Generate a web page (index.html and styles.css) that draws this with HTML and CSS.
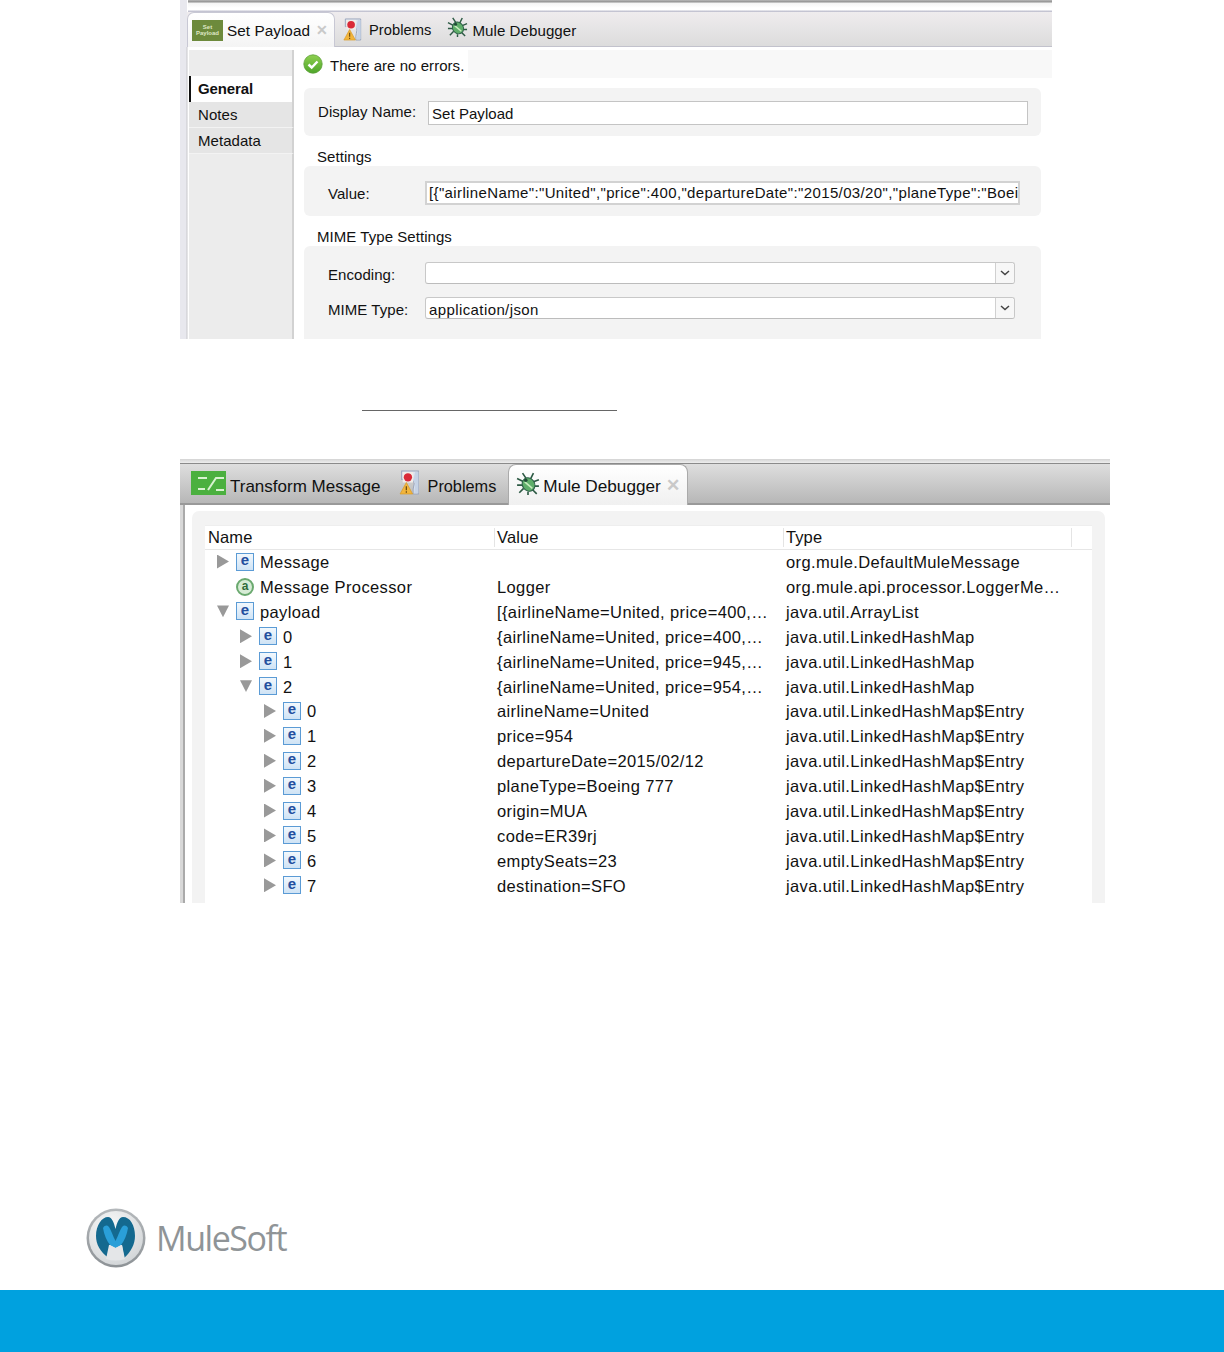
FILE: index.html
```html
<!DOCTYPE html>
<html lang="en">
<head>
<meta charset="utf-8">
<title>Set Payload and Mule Debugger</title>
<link rel="stylesheet" href="styles.css">
</head>
<body>
<svg class="defs" width="0" height="0" aria-hidden="true">
  <defs>
    <linearGradient id="gCheck" x1="0" y1="0" x2="0" y2="1"><stop offset="0" stop-color="#8fd050"/><stop offset="1" stop-color="#4ea52a"/></linearGradient>
    <linearGradient id="gRing" x1="0" y1="0" x2="0" y2="1"><stop offset="0" stop-color="#b5b9bc"/><stop offset="1" stop-color="#8d9296"/></linearGradient>
    <radialGradient id="gFace" cx=".4" cy=".3" r=".9"><stop offset="0" stop-color="#fafafa"/><stop offset="1" stop-color="#c9cdd0"/></radialGradient>
    <symbol id="problems" viewBox="0 0 20 24">
      <path d="M2 1h16v22h-5V19c0-2 1-4 1-6s-1-3-2-4H5L2 9z" fill="#dfe4ee" stroke="#9aa6bd" stroke-width="1"/>
      <rect x="3" y="2" width="10" height="10" fill="#f1ece8"/>
      <circle cx="8" cy="7" r="4" fill="#d92a38"/>
      <path d="M13 10l2 3-1 9h4V2h-3z" fill="#c6d3e6"/>
      <path d="M6.500 12L12.500 23H.5z" fill="#f2b53c" stroke="#d99a25" stroke-width=".7"/>
      <path d="M6.500 15.500v4M6.500 20.500v1.300" stroke="#6b4a10" stroke-width="1.200"/>
    </symbol>
    <symbol id="bug" viewBox="0 0 22 22">
      <path d="M6 1l4 6M16 1l-3 6M1 6l6 3M21 7l-5 2M1 12h5M21 13h-4M3 19l4-4M19 20l-4-4M11 21l0-3" stroke="#2d5a44" stroke-width="1.500" fill="none"/>
      <ellipse cx="11.500" cy="11.500" rx="5.600" ry="6.400" fill="#5fae6a" stroke="#2c5f47" stroke-width="1" transform="rotate(-35 11.500 11.500)"/>
      <path d="M8 9l7 6" stroke="#c8ecbe" stroke-width="1.500"/>
      <circle cx="9" cy="7.500" r="1.600" fill="#1f4a36"/>
    </symbol>
    <symbol id="chev" viewBox="0 0 10 6">
      <path d="M1 1l4 3.500L9 1" fill="none" stroke="#444" stroke-width="1.500"/>
    </symbol>
  </defs>
</svg>
<div class="page">

  <section class="panel-a">
    <div class="strip-a"></div>
    <div class="tabs-a">
      <div class="tab-a-active">
        <span class="payload-icon"><span>Set</span><span>Payload</span></span>
        <span class="tab-a-label">Set Payload</span>
        <span class="close-a">✕</span>
      </div>
      <div class="tab-a tab-a-problems">
        <svg class="ico-prob-a"><use href="#problems"/></svg>
        <span class="tab-a-label">Problems</span>
      </div>
      <div class="tab-a tab-a-debug">
        <svg class="ico-bug-a"><use href="#bug"/></svg>
        <span class="tab-a-label">Mule Debugger</span>
      </div>
    </div>
    <div class="body-a">
      <aside class="side">
        <div class="side-gap"></div>
        <div class="side-item side-active">General</div>
        <div class="side-item">Notes</div>
        <div class="side-item">Metadata</div>
      </aside>
      <div class="form">
        <div class="status">
          <div class="status-msg">
            <svg class="check" viewBox="0 0 20 20">
              <circle cx="10" cy="10" r="9.200" fill="url(#gCheck)" stroke="#5c9f37" stroke-width=".8"/>
              <path d="M5.500 10.500l3.200 3 5.800-6" fill="none" stroke="#fff" stroke-width="2.400"/>
            </svg>
            <span>There are no errors.</span>
          </div>
        </div>
        <div class="group group-name">
          <span class="lbl lbl-name">Display Name:</span>
          <div class="field field-name">Set Payload</div>
        </div>
        <div class="group-title title-settings">Settings</div>
        <div class="group group-value">
          <span class="lbl lbl-value">Value:</span>
          <div class="field field-value">[{"airlineName":"United","price":400,"departureDate":"2015/03/20","planeType":"Boei</div>
        </div>
        <div class="group-title title-mime">MIME Type Settings</div>
        <div class="group group-mime">
          <div class="mime-row">
            <span class="lbl lbl-value">Encoding:</span>
            <div class="combo"><div class="combo-text"></div><div class="combo-btn"><svg class="chev"><use href="#chev"/></svg></div></div>
          </div>
          <div class="mime-row">
            <span class="lbl lbl-value">MIME Type:</span>
            <div class="combo"><div class="combo-text">application/json</div><div class="combo-btn"><svg class="chev"><use href="#chev"/></svg></div></div>
          </div>
        </div>
      </div>
    </div>
  </section>

  <div class="rule"></div>

  <section class="panel-b">
    <div class="strip-b"></div>
    <div class="tabs-b">
      <div class="tab-b tab-b-transform">
        <svg class="ico-transform" viewBox="0 0 35 24">
          <rect width="35" height="24" fill="#4bb03f"/>
          <path d="M7 7h9M25 19h8M17 19l8-12h8M7 18h7" fill="none" stroke="#d8f2d0" stroke-width="2"/>
        </svg>
        <span class="tab-b-label">Transform Message</span>
      </div>
      <div class="tab-b tab-b-problems">
        <svg class="ico-prob-b"><use href="#problems"/></svg>
        <span class="tab-b-label">Problems</span>
      </div>
      <div class="tab-b-active">
        <svg class="ico-bug-b"><use href="#bug"/></svg>
        <span class="tab-b-active-label">Mule Debugger</span>
        <span class="close-b">✕</span>
      </div>
    </div>
    <div class="body-b">
      <div class="card">
        <div class="tree">
          <div class="tree-head">
            <div class="th th-name">Name</div>
            <div class="th">Value</div>
            <div class="th th-type">Type</div>
          </div>
          <div class="row"><div class="cell-name l1"><i class="tri"></i><b class="e">e</b>Message</div><div class="cell"></div><div class="cell">org.mule.DefaultMuleMessage</div></div>
          <div class="row"><div class="cell-name l1"><i class="tri-none"></i><b class="a">a</b>Message Processor</div><div class="cell">Logger</div><div class="cell">org.mule.api.processor.LoggerMe…</div></div>
          <div class="row"><div class="cell-name l1"><i class="tri-down"></i><b class="e">e</b>payload</div><div class="cell">[{airlineName=United, price=400,…</div><div class="cell">java.util.ArrayList</div></div>
          <div class="row"><div class="cell-name l2"><i class="tri"></i><b class="e">e</b>0</div><div class="cell">{airlineName=United, price=400,…</div><div class="cell">java.util.LinkedHashMap</div></div>
          <div class="row"><div class="cell-name l2"><i class="tri"></i><b class="e">e</b>1</div><div class="cell">{airlineName=United, price=945,…</div><div class="cell">java.util.LinkedHashMap</div></div>
          <div class="row"><div class="cell-name l2"><i class="tri-down"></i><b class="e">e</b>2</div><div class="cell">{airlineName=United, price=954,…</div><div class="cell">java.util.LinkedHashMap</div></div>
          <div class="row"><div class="cell-name l3"><i class="tri"></i><b class="e">e</b>0</div><div class="cell">airlineName=United</div><div class="cell">java.util.LinkedHashMap$Entry</div></div>
          <div class="row"><div class="cell-name l3"><i class="tri"></i><b class="e">e</b>1</div><div class="cell">price=954</div><div class="cell">java.util.LinkedHashMap$Entry</div></div>
          <div class="row"><div class="cell-name l3"><i class="tri"></i><b class="e">e</b>2</div><div class="cell">departureDate=2015/02/12</div><div class="cell">java.util.LinkedHashMap$Entry</div></div>
          <div class="row"><div class="cell-name l3"><i class="tri"></i><b class="e">e</b>3</div><div class="cell">planeType=Boeing 777</div><div class="cell">java.util.LinkedHashMap$Entry</div></div>
          <div class="row"><div class="cell-name l3"><i class="tri"></i><b class="e">e</b>4</div><div class="cell">origin=MUA</div><div class="cell">java.util.LinkedHashMap$Entry</div></div>
          <div class="row"><div class="cell-name l3"><i class="tri"></i><b class="e">e</b>5</div><div class="cell">code=ER39rj</div><div class="cell">java.util.LinkedHashMap$Entry</div></div>
          <div class="row"><div class="cell-name l3"><i class="tri"></i><b class="e">e</b>6</div><div class="cell">emptySeats=23</div><div class="cell">java.util.LinkedHashMap$Entry</div></div>
          <div class="row"><div class="cell-name l3"><i class="tri"></i><b class="e">e</b>7</div><div class="cell">destination=SFO</div><div class="cell">java.util.LinkedHashMap$Entry</div></div>
        </div>
      </div>
    </div>
  </section>

  <div class="logo">
    <svg class="logo-mark" viewBox="0 0 60 60">
      <circle cx="30" cy="30" r="29.500" fill="url(#gRing)"/>
      <circle cx="30" cy="30" r="27" fill="url(#gFace)"/>
      <path d="M23 50C14 44 10 36 10 28 10 17 16 9 22 9c4 0 6 6 7.500 12C31 15 33 9 37 9c7 0 12 8 12 19 0 8-4 16-11 22l-2-13H23z" fill="#14698f"/>
      <path d="M17 20c2-3 4-3 6-1 2 3 4 9 6.500 14 2.500-5 4.500-11 6.500-14 2-2 4-2 6 1-1 7-4 13-7 17l-5.500 3-5.500-3c-3-4-6-10-7-17z" fill="#2a9fd8"/>
      <path d="M23 37l6.500 3 6.500-3 3 14q-9.500 3-19 0z" fill="#e4e6e8"/>
    </svg>
    <span class="logo-text">MuleSoft</span>
  </div>

  <footer class="footer"></footer>
</div>
</body>
</html>
```
FILE: styles.css
```css
* { box-sizing: border-box; }
html, body { margin: 0; padding: 0; background: #fff; }
body { font-family: "Liberation Sans", Arial, sans-serif; color: #111; }
.defs { position: absolute; }
.page { width: 1224px; height: 1352px; display: flex; flex-direction: column; overflow: hidden; }

/* top panel */
.panel-a { width: 872px; height: 339px; margin-left: 180px; display: flex; flex-direction: column; overflow: hidden; font-size: 15px; letter-spacing: .05px; background: linear-gradient(90deg, #e8e8ee 7px, #fff 7px); }
.strip-a { height: 12px; flex: none; background: linear-gradient(#b9b9b9 0, #8f8f8f 2px, #f4f4f4 3px, #fff 8px, #fff 10px, #c4c4d2 11px); margin-left: 8px; }
.tabs-a { height: 35px; flex: none; display: flex; align-items: stretch; margin-left: 7px; background: linear-gradient(#efecee, #dcdcdc); border-bottom: 1px solid #c2c2cc; position: relative; }
.tab-a-active { width: 148px; height: 35px; display: flex; align-items: center; padding-left: 4px; background: linear-gradient(#fff, #f4f4f4); border: 1px solid #c8c8d4; border-bottom: 0; border-radius: 7px 7px 0 0; flex: none; }
.payload-icon { width: 31px; height: 21px; flex: none; background: #6d8a3c; color: #dfe8c4; font-size: 6px; line-height: 6px; letter-spacing: 0; display: flex; flex-direction: column; align-items: center; justify-content: center; font-weight: 700; }
.tab-a-label { font-size: 15.100px; white-space: nowrap; margin-top: 2px; }
.tab-a-problems .tab-a-label { font-size: 14.700px; }
.tab-a-active .tab-a-label { margin-left: 4px; font-size: 15.300px; }
.close-a { margin-left: 6px; color: #c9c9c9; font-size: 14px; font-weight: 700; }
.tab-a { display: flex; align-items: center; }
.tab-a-problems { margin-left: 8px; }
.tab-a-debug { margin-left: 16px; }
.ico-prob-a { width: 20px; height: 23px; margin-right: 6px; }
.ico-bug-a { width: 21px; height: 21px; margin-right: 4px; margin-top: -3px; }
.body-a { flex: 1; display: flex; background: #fff; }
.side { width: 114px; flex: none; padding: 3px 0 0 9px; background: linear-gradient(90deg, #e8e8ee 0, #e8e8ee 6px, #c8c8cc 7px, #fff 8px, #fff 9px, transparent 9px); display: flex; flex-direction: column; }
.side::after { content: ""; flex: 1; background: #ececec; border-right: 2px solid #d2d2d2; }
.side-gap { height: 26px; background: #ececec; border-right: 2px solid #d2d2d2; }
.side-item { height: 26px; line-height: 25px; padding-left: 9px; background: #e5e5e5; border-bottom: 1px solid #f3f3f3; border-right: 2px solid #d2d2d2; }
.side-active { font-weight: 700; background: #fff; border-left: 2px solid #111; padding-left: 7px; border-bottom: 0; letter-spacing: -.1px; }
.form { flex: 1; padding: 3px 0 0 7px; display: flex; flex-direction: column; }
.status { height: 28px; flex: none; background: #f8f8f8; }
.status-msg { width: 167px; height: 28px; background: #fff; display: flex; align-items: center; padding-left: 2px; }
.check { width: 20px; height: 20px; margin-right: 7px; }
.status-msg span { margin-top: 3px; }
.group { width: 737px; margin-left: 3px; background: #f3f3f3; border-radius: 6px; flex: none; }
.group-name { height: 48px; margin-top: 10px; display: flex; align-items: center; padding: 2px 0 0 14px; }
.lbl { white-space: nowrap; flex: none; }
.lbl-name { width: 110px; margin-top: -4px; }
.lbl-value { padding-left: 24px; }
.field { height: 24px; line-height: 23px; background: #fff; border: 1px solid #c4c4c4; padding-left: 3px; white-space: nowrap; overflow: hidden; }
.field-name { width: 600px; }
.group-title { flex: none; padding-left: 16px; line-height: 18px; }
.title-settings { margin-top: 12px; height: 18px; }
.group-value { height: 50px; display: flex; align-items: center; padding-top: 4px; }
.group-value .lbl-value { width: 121px; }
.field-value { width: 595px; border: 2px solid #d2d2d2; line-height: 20px; padding-left: 2px; letter-spacing: .37px; }
.title-mime { margin-top: 12px; height: 18px; }
.group-mime { height: 100px; padding-top: 16px; display: flex; flex-direction: column; gap: 13px; border-radius: 6px 6px 0 0; }
.mime-row { display: flex; align-items: center; height: 22px; }
.mime-row .lbl-value { width: 121px; margin-top: 2px; }
.combo { width: 590px; height: 22px; display: flex; background: #fff; border: 1px solid #c8c8c8; border-radius: 3px; border-bottom-color: #bcbcbc; }
.combo-text { flex: 1; line-height: 23px; padding-left: 3px; letter-spacing: .4px; }
.combo-btn { width: 19px; background: #f7f7f7; border-left: 1px solid #d0d0d0; display: flex; align-items: center; justify-content: center; border-radius: 0 3px 3px 0; }
.chev { width: 10px; height: 6px; }

.rule { width: 255px; height: 1px; margin: 71px 0 0 362px; background: #666; flex: none; }

/* lower panel */
.panel-b { width: 930px; height: 444px; margin: 48px 0 0 180px; display: flex; flex-direction: column; overflow: hidden; flex: none; }
.strip-b { height: 5px; flex: none; background: linear-gradient(#d4d4d4, #eee 4px, #8a8a8a 4px, #8a8a8a 5px); }
.tabs-b { height: 41px; flex: none; display: flex; background: linear-gradient(#dedede, #b7b7b7); border-bottom: 2px solid #999; position: relative; }
.tab-b { display: flex; align-items: center; }
.tab-b-label { font-size: 17px; margin-top: 6px; }
.tab-b-transform { padding-left: 11px; }
.ico-transform { width: 35px; height: 24px; margin-right: 4px; margin-top: -1px; }
.tab-b-problems { margin-left: 18px; }
.tab-b-problems .tab-b-label { font-size: 16.300px; }
.ico-prob-b { width: 22px; height: 25px; margin-right: 7px; margin-top: -2px; }
.tab-b-active { margin-left: 12px; width: 180px; height: 41px; display: flex; align-items: center; padding-left: 7px; background: linear-gradient(#fff, #f0f0f0); border: 1px solid #aaa; border-bottom: 0; border-radius: 8px 8px 0 0; }
.tab-b-active-label { font-size: 17.200px; margin-top: 2px; white-space: nowrap; }
.ico-bug-b { width: 24px; height: 24px; margin-right: 3px; margin-top: -3px; }
.close-b { margin-left: 5px; color: #c9c9c9; font-size: 17px; font-weight: 700; }
.body-b { flex: 1; padding: 6px 5px 0 12px; background: linear-gradient(90deg, #d8d8d8 0, #d8d8d8 3px, #aaa 3px, #aaa 5px, #fff 5px); min-height: 0; }
.card { height: 100%; background: #f3f3f3; border-radius: 7px 7px 0 0; padding: 14px 13px 0 13px; }
.tree { height: 100%; background: #fff; overflow: hidden; }
.tree-head { height: 25px; display: grid; grid-template-columns: 289px 289px 289px; border-bottom: 1px solid #e6e6e6; border-top: 1px solid #eee; font-size: 16.500px; letter-spacing: .1px; }
.th { padding-left: 2px; border-left: 1px solid #e4e4e4; margin: 2px 0 3px; line-height: 19px; }
.th-name { border-left: 0; padding-left: 3px; }
.th-type { border-right: 1px solid #e4e4e4; }
.row { height: 24.920px; display: grid; grid-template-columns: 289px 289px 1fr; line-height: 25px; white-space: nowrap; font-size: 16.500px; letter-spacing: .38px; }
.cell { padding-left: 3px; }
.cell-name { display: flex; align-items: center; }
.l1 { padding-left: 12px; }
.l2 { padding-left: 35px; }
.l3 { padding-left: 59px; }
.tri, .tri-down, .tri-none { width: 12px; height: 14px; margin-right: 7px; flex: none; margin-top: -2px; }
.tri { background: #999; clip-path: polygon(0 0, 100% 50%, 0 100%); }
.tri-down { background: #999; clip-path: polygon(0 8%, 100% 8%, 50% 92%); }
.e { width: 18px; height: 18px; flex: none; margin-right: 6px; margin-top: -2px; display: flex; align-items: center; justify-content: center; background: linear-gradient(#f2f8fd, #cfe3f5); border: 1.500px solid #5b9bd5; color: #234f9e; font: 700 15px/14px "Liberation Sans", sans-serif; letter-spacing: 0; padding-bottom: 3px; }
.a { width: 18px; height: 18px; flex: none; margin-right: 6px; margin-top: -1px; border-radius: 50%; display: flex; align-items: center; justify-content: center; background: #d7ecd6; border: 2px solid #6aa96f; color: #2f6b3a; font: 700 12px/12px "Liberation Sans", sans-serif; letter-spacing: 0; padding-bottom: 2px; }

/* logo and footer */
.logo { margin: 305px 0 0 86px; height: 60px; display: flex; align-items: center; flex: none; }
.logo-mark { width: 60px; height: 60px; flex: none; }
.logo-text { margin-left: 10px; font-family: "Open Sans", sans-serif; font-weight: 400; font-size: 34px; letter-spacing: -1.450px; color: #8f9497; }
.footer { margin-top: 22px; height: 62px; background: #00a1df; flex: none; }
```
